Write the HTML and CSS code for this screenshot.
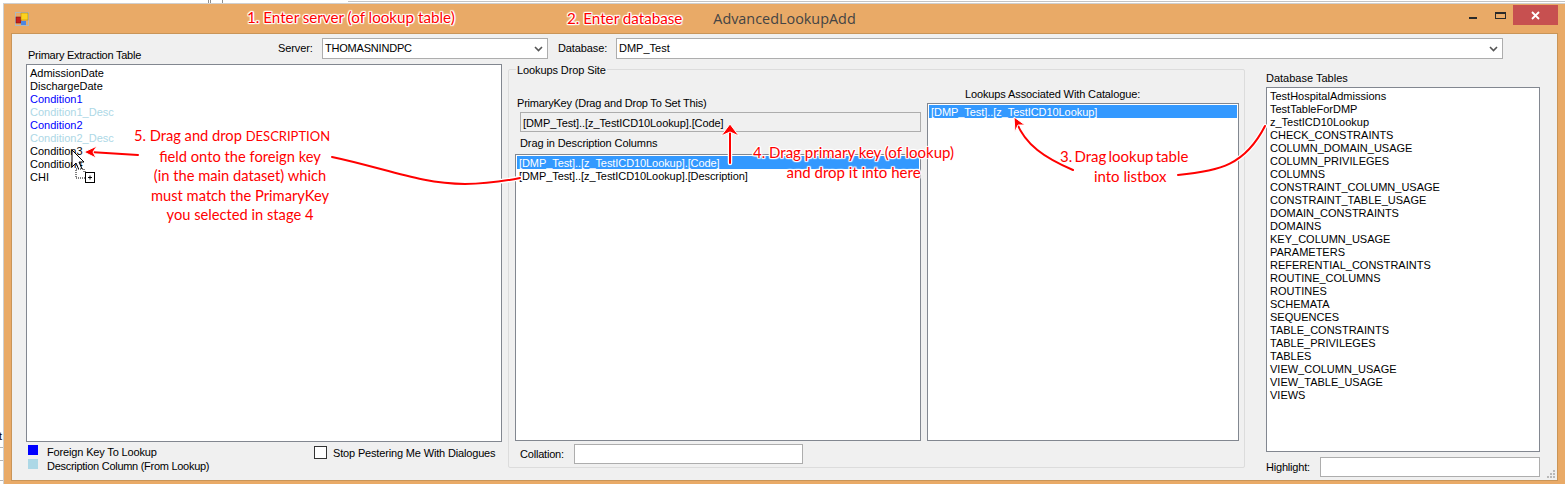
FILE: index.html
```html
<!DOCTYPE html>
<html lang="en">
<head>
<meta charset="utf-8">
<title>AdvancedLookupAdd</title>
<link rel="stylesheet" href="styles.css">
</head>
<body>
<svg class="backdrop" width="1565" height="484" viewBox="0 0 1565 484">
  <path d="M208.5 0V4M210.5 0V4M222.5 0V4" stroke="#8e8e8e" fill="none"/>
  <path d="M348 1.5H1565" stroke="#c4c4c4" fill="none"/>
  <path d="M0 447.5H4M0 460.5H4M0 480.5H4" stroke="#b5b5b5" fill="none"/>
  <text x="-1" y="440" class="backdrop-t">t</text>
</svg>

<div class="window">
  <header class="titlebar">
    <svg class="app-icon" width="14" height="14" viewBox="0 0 14 14">
      <rect width="14" height="14" fill="#aeb7bf"/>
      <rect x="1" y="1" width="12" height="12" fill="#e9aa67"/>
      <rect x="1" y="5" width="5" height="6" fill="#c8201c" stroke="#7c1512" stroke-width=".6"/>
      <rect x="6" y="1" width="7" height="7" fill="#fbd21e" stroke="#b98a10" stroke-width=".6"/>
      <rect x="6" y="9" width="5" height="4" fill="#4d86e0"/>
    </svg>
    <div class="title">AdvancedLookupAdd</div>
    <div class="controls">
      <span class="ctl-min"></span>
      <span class="ctl-max"></span>
      <span class="ctl-close">
        <svg width="9" height="9" viewBox="0 0 9 9"><path d="M1 1L8 8M8 1L1 8" stroke="#fff" stroke-width="1.8"/></svg>
      </span>
    </div>
  </header>

  <main class="client">
    <div class="conn">
      <label class="conn-label server-label">Server:</label>
      <div class="combo server-combo">
        <span>THOMASNINDPC</span>
        <svg class="chev" width="9" height="6" viewBox="0 0 9 6"><path d="M1 1L4.5 4.5L8 1" stroke="#555" stroke-width="1.6" fill="none"/></svg>
      </div>
      <label class="conn-label db-label">Database:</label>
      <div class="combo db-combo">
        <span>DMP_Test</span>
        <svg class="chev" width="9" height="6" viewBox="0 0 9 6"><path d="M1 1L4.5 4.5L8 1" stroke="#555" stroke-width="1.6" fill="none"/></svg>
      </div>
    </div>

    <section class="col-left">
      <div class="caption caption-left">Primary Extraction Table</div>
      <ul class="listbox list-primary">
        <li>AdmissionDate</li>
        <li>DischargeDate</li>
        <li class="fk">Condition1</li>
        <li class="desc">Condition1_Desc</li>
        <li class="fk">Condition2</li>
        <li class="desc">Condition2_Desc</li>
        <li>Condition3</li>
        <li>Condition4</li>
        <li>CHI</li>
      </ul>
      <div class="left-foot">
        <div class="keys">
          <div class="key"><i class="swatch swatch-fk"></i><span class="key-fk">Foreign Key To Lookup</span></div>
          <div class="key"><i class="swatch swatch-desc"></i><span class="key-desc">Description Column (From Lookup)</span></div>
        </div>
        <div class="pester"><i class="checkbox"></i><span>Stop Pestering Me With Dialogues</span></div>
      </div>
    </section>

    <fieldset class="dropsite">
      <legend>Lookups Drop Site</legend>
      <div class="drop-inner">
        <div class="drop-main">
          <div class="caption pk-caption">PrimaryKey (Drag and Drop To Set This)</div>
          <div class="pk-box">[DMP_Test]..[z_TestICD10Lookup].[Code]</div>
          <div class="caption desc-caption">Drag in Description Columns</div>
          <ul class="listbox list-desc">
            <li class="sel">[DMP_Test]..[z_TestICD10Lookup].[Code]</li>
            <li>[DMP_Test]..[z_TestICD10Lookup].[Description]</li>
          </ul>
          <div class="collation">
            <span class="collation-label">Collation:</span>
            <div class="textbox collation-input"></div>
          </div>
        </div>
        <div class="drop-side">
          <div class="caption assoc-caption">Lookups Associated With Catalogue:</div>
          <ul class="listbox list-assoc">
            <li class="sel">[DMP_Test]..[z_TestICD10Lookup]</li>
          </ul>
        </div>
      </div>
    </fieldset>

    <section class="col-right">
      <div class="caption tables-caption">Database Tables</div>
      <ul class="listbox list-tables">
        <li>TestHospitalAdmissions</li>
        <li>TestTableForDMP</li>
        <li>z_TestICD10Lookup</li>
        <li>CHECK_CONSTRAINTS</li>
        <li>COLUMN_DOMAIN_USAGE</li>
        <li>COLUMN_PRIVILEGES</li>
        <li>COLUMNS</li>
        <li>CONSTRAINT_COLUMN_USAGE</li>
        <li>CONSTRAINT_TABLE_USAGE</li>
        <li>DOMAIN_CONSTRAINTS</li>
        <li>DOMAINS</li>
        <li>KEY_COLUMN_USAGE</li>
        <li>PARAMETERS</li>
        <li>REFERENTIAL_CONSTRAINTS</li>
        <li>ROUTINE_COLUMNS</li>
        <li>ROUTINES</li>
        <li>SCHEMATA</li>
        <li>SEQUENCES</li>
        <li>TABLE_CONSTRAINTS</li>
        <li>TABLE_PRIVILEGES</li>
        <li>TABLES</li>
        <li>VIEW_COLUMN_USAGE</li>
        <li>VIEW_TABLE_USAGE</li>
        <li>VIEWS</li>
      </ul>
      <div class="highlight">
        <span class="highlight-label">Highlight:</span>
        <div class="textbox highlight-input"></div>
      </div>
    </section>

    <svg class="grip" width="8" height="8" viewBox="0 0 8 8">
      <path d="M6 0h2v2H6zM3 3h2v2H3zM6 3h2v2H6zM0 6h2v2H0zM3 6h2v2H3zM6 6h2v2H6z" fill="#b9b9b9"/>
    </svg>
  </main>
</div>

<svg class="arrows" width="1565" height="484" viewBox="0 0 1565 484">
  <g fill="none" stroke-linecap="round">
    <g stroke="#fff" stroke-width="4.5">
      <path d="M730 163V128"/>
      <path d="M1073 170C1045 158 1025 145 1016 121"/>
      <path d="M1178 175C1220 171 1245 165 1265 126"/>
      <path d="M332 157C385 168 420 184 465 184C485 184 505 181 520 178"/>
      <path d="M138 155L90 152"/>
    </g>
    <g stroke="#f00" stroke-width="2">
      <path d="M730 163V128"/>
      <path d="M1073 170C1045 158 1025 145 1016 121"/>
      <path d="M1178 175C1220 171 1245 165 1265 126"/>
      <path d="M332 157C385 168 420 184 465 184C485 184 505 181 520 178"/>
      <path d="M138 155L90 152"/>
    </g>
  </g>
  <path d="M730 124L739 136L730 132L721 136Z" fill="#f00" stroke="#fff" stroke-width="1"/>
  <path d="M1014 117L1025 125L1018 125L1015 132Z" fill="#f00" stroke="#fff" stroke-width="1"/>
  <path d="M84 152L97 146L93 152L96 158Z" fill="#f00" stroke="#fff" stroke-width="1"/>
  <path d="M72 150V167L76 163L79 170L82 169L79 162L84 162Z" fill="#fff" stroke="#000" stroke-width="1"/>
  <path d="M76 169H84V172H87V178H76Z" fill="#fff" stroke="#000" stroke-width="1" stroke-dasharray="1 1"/>
  <rect x="85.500" y="172.500" width="9" height="10" fill="#fff" stroke="#000"/>
  <path d="M88 177.500H92M90 175.500V179.500" stroke="#000"/>
</svg>

<div class="note note-1">1. Enter server (of lookup table)</div>
<div class="note note-2">2. Enter database</div>
<div class="note note-3"><span class="note-3-a">3. Drag lookup table</span><br><span class="note-3-b">into listbox</span></div>
<div class="note note-4">4. Drag primary key (of lookup)<br>and drop it into here</div>
<div class="note note-5">5. Drag and drop <span class="note-caps">DESCRIPTION</span><span class="note-5-rest">field onto the foreign key<br>(in the main dataset) which<br>must match the PrimaryKey<br>you selected in stage 4</span></div>
</body>
</html>
```

FILE: styles.css
```css
* { box-sizing: border-box; }

html, body {
  margin: 0;
  padding: 0;
}

body {
  position: relative;
  width: 1565px;
  height: 484px;
  overflow: hidden;
  background: #fff;
  font-family: "Liberation Sans", Arial, sans-serif;
  font-size: 11px;
  line-height: 13px;
  color: #000;
}

.backdrop, .arrows {
  position: absolute;
  left: 0;
  top: 0;
}

.arrows { z-index: 2; pointer-events: none; }

.backdrop-t { font-size: 11px; fill: #000; }

.window {
  position: relative;
  display: flex;
  flex-direction: column;
  width: 1561px;
  height: 480px;
  margin: 4px 0 0 4px;
  background: #e9aa67;
  box-shadow: 0 0 0 1px #cfcfcf;
}

.titlebar {
  position: relative;
  flex: none;
  height: 30px;
}

.app-icon {
  position: absolute;
  left: 11px;
  top: 8px;
}

.title {
  text-align: center;
  font-family: "Open Sans", "Noto Sans", sans-serif;
  font-size: 14.4px;
  line-height: 30px;
  color: #444;
}

.controls {
  position: absolute;
  right: 7px;
  top: 1px;
  display: flex;
  align-items: flex-start;
  height: 20px;
}

.ctl-min {
  width: 8px;
  height: 2px;
  margin-top: 12px;
  background: #2a2a2a;
}

.ctl-max {
  width: 11px;
  height: 7px;
  margin: 7px 7px 0 18px;
  border: 1px solid #2a2a2a;
  border-top-width: 2px;
}

.ctl-close {
  display: flex;
  align-items: center;
  justify-content: center;
  width: 45px;
  height: 20px;
  background: #c75050;
}

.client {
  position: relative;
  flex: 1;
  margin: 0 8px 4px;
  padding: 4px 0 0 14px;
  background: #f0f0f0;
  box-shadow: 0 0 0 1px #c99558;
  display: grid;
  grid-template-columns: 476px 737px 274px;
  column-gap: 6px;
  align-items: start;
}

.conn {
  grid-column: 1 / -1;
  grid-row: 1;
  display: flex;
  align-items: center;
  height: 21px;
  padding-left: 252px;
}

.conn-label { flex: none; }
.server-label { width: 44px; letter-spacing: -.1px; }
.db-label { width: 58px; margin-left: 10px; letter-spacing: -.1px; }

.combo {
  display: flex;
  align-items: center;
  justify-content: space-between;
  height: 21px;
  padding: 0 4px 0 2px;
  background: #fff;
  border: 1px solid #adadad;
}

.server-combo { width: 226px; letter-spacing: -.2px; }
.db-combo { width: 887px; }

.caption { height: 13px; white-space: nowrap; }

.col-left {
  grid-column: 1;
  grid-row: 1;
  padding-top: 11px;
}

.caption-left { margin-left: 2px; letter-spacing: -.25px; }

.listbox {
  list-style: none;
  margin: 0;
  padding: 1px;
  background: #fff;
  border: 1px solid #828790;
}

.listbox li {
  height: 13px;
  padding-left: 2px;
  line-height: 15px;
  white-space: nowrap;
}

.listbox .fk { color: #00f; }
.listbox .desc { color: #add8e6; }
.listbox .sel { background: #39f; color: #fff; }

.list-primary { height: 378px; margin-top: 2px; }

.left-foot {
  display: flex;
  margin-top: 3px;
}

.keys {
  flex: none;
  width: 288px;
  padding-left: 2px;
}

.key {
  display: flex;
  height: 14px;
  gap: 9px;
}

.key span { padding-top: 1px; white-space: nowrap; }
.key-fk { letter-spacing: -.15px; }
.key-desc { letter-spacing: -.28px; }

.swatch {
  flex: none;
  width: 10px;
  height: 10px;
}

.swatch-fk { background: #00f; }
.swatch-desc { background: #add8e6; }

.pester {
  display: flex;
  gap: 6px;
  margin-top: 1px;
  white-space: nowrap;
}

.pester span { line-height: 15px; letter-spacing: -.16px; }

.checkbox {
  flex: none;
  width: 13px;
  height: 13px;
  background: #fff;
  border: 1px solid #333;
}

.dropsite {
  grid-column: 2;
  grid-row: 1;
  min-width: 0;
  height: 405px;
  margin: 25px 0 0;
  padding: 0;
  border: 1px solid #dcdcdc;
  border-radius: 2px;
}

.dropsite legend {
  margin-left: 7px;
  padding: 0 1px;
  line-height: 15px;
  height: 13px;
  letter-spacing: -.1px;
}

.drop-inner {
  display: flex;
  gap: 6px;
  padding-left: 6px;
}

.drop-main { flex: none; width: 406px; padding-top: 20px; }
.pk-caption { margin-left: 2px; line-height: 15px; letter-spacing: -.2px; }

.pk-box {
  width: 401px;
  height: 20px;
  margin: 3px 0 0 5px;
  padding: 4px 0 0 2px;
  border: 1px solid #adadad;
  letter-spacing: -.08px;
}

.desc-caption { margin: 4px 0 0 5px; line-height: 15px; letter-spacing: -.1px; }

.list-desc { height: 287px; margin-top: 5px; letter-spacing: -.08px; }

.collation {
  display: flex;
  align-items: center;
  margin: 3px 0 0 5px;
}

.collation-label { width: 54px; padding-top: 1px; letter-spacing: -.2px; }

.textbox {
  height: 20px;
  background: #fff;
  border: 1px solid #adadad;
}

.collation-input { width: 229px; }

.drop-side { flex: none; width: 312px; padding-top: 12px; }
.assoc-caption { margin-left: 38px; letter-spacing: -.12px; }
.list-assoc { height: 338px; margin-top: 2px; letter-spacing: -.06px; }

.col-right {
  grid-column: 3;
  grid-row: 1;
  margin-left: 15px;
  padding-top: 34px;
  width: 274px;
}

.tables-caption { line-height: 13px; }

.list-tables { height: 365px; margin-top: 2px; }

.highlight {
  display: flex;
  align-items: center;
  margin-top: 5px;
}

.highlight-label { width: 54px; letter-spacing: -.2px; }
.highlight-input { width: 220px; }

.grip {
  position: absolute;
  right: 2px;
  bottom: 2px;
}

.note {
  position: absolute;
  z-index: 3;
  font-family: Lato, "Open Sans", sans-serif;
  font-size: 15px;
  line-height: 19.5px;
  color: #f00;
  text-align: center;
  white-space: nowrap;
  text-shadow: 1px 0 1px #fff, -1px 0 1px #fff, 0 1px 1px #fff, 0 -1px 1px #fff, 1px 1px 1px #fff, -1px -1px 1px #fff, 1px -1px 1px #fff, -1px 1px 1px #fff;
}

.note-1 { left: 247px; top: 8px; font-size: 15.2px; }
.note-2 { left: 567px; top: 9px; font-size: 15.2px; }
.note-3 { left: 1060px; top: 147px; }
.note-3-a { word-spacing: -1.6px; }
.note-3-b { padding-left: 12px; }
.note-4 { left: 753px; top: 143px; }
.note-5 { left: 133px; top: 126px; width: 198px; font-size: 14.7px; }
.note-5-rest { display: block; margin-left: 8px; margin-right: -8px; }
.note-caps { font-size: 13px; }
```
